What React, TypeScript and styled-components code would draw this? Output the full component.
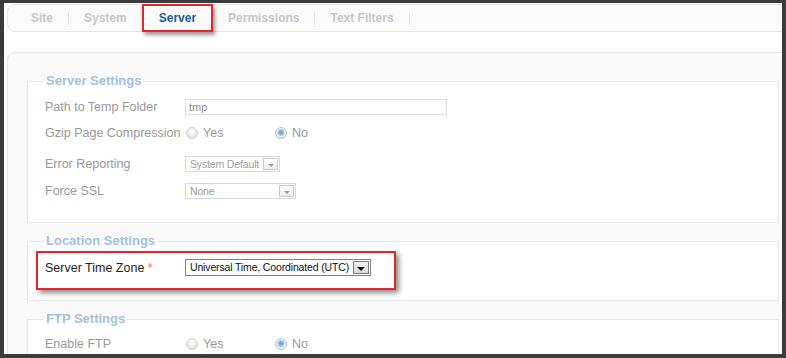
import React from "react";
import styled, { createGlobalStyle } from "styled-components";

const GlobalStyle = createGlobalStyle`
  html, body {
    margin: 0;
    padding: 0;
    background: #fff;
  }
  body {
    font-family: "Liberation Sans", Arial, sans-serif;
  }
`;

const tabs = ["Site", "System", "Server", "Permissions", "Text Filters"];
const activeTab = "Server";

function App() {
  return (
    <>
      <GlobalStyle />
      <Frame>
        <TabBar>
          {tabs.map((tab, i) => {
            const next = tabs[i + 1];
            const showDivider = tab !== activeTab && next !== activeTab;
            return (
              <React.Fragment key={tab}>
                <Tab $active={tab === activeTab}>{tab}</Tab>
                {showDivider && <Divider />}
              </React.Fragment>
            );
          })}
        </TabBar>

        <Panel>
          <Fieldset $top={10} $bottom={23}>
            <Legend>Server Settings</Legend>
            <Row>
              <Label>Path to Temp Folder</Label>
              <TextInput value="tmp" readOnly />
            </Row>
            <Row $space={10}>
              <Label>Gzip Page Compression</Label>
              <Radio label="Yes" />
              <Radio label="No" checked />
            </Row>
            <Row $space={15}>
              <Label>Error Reporting</Label>
              <Select>
                <SelectText>System Default</SelectText>
                <SelectArrow />
              </Select>
            </Row>
            <Row $space={11}>
              <Label>Force SSL</Label>
              <Select $width={111}>
                <SelectText>None</SelectText>
                <SelectArrow />
              </Select>
            </Row>
          </Fieldset>

          <Fieldset $top={2} $bottom={10}>
            <Legend>Location Settings</Legend>
            <Highlight>
              <Label $strong>
                Server Time Zone <Required>*</Required>
              </Label>
              <Select $strong>
                <SelectText>Universal Time, Coordinated (UTC)</SelectText>
                <SelectArrow $strong />
              </Select>
            </Highlight>
          </Fieldset>

          <Fieldset $top={9} $bottom={20}>
            <Legend>FTP Settings</Legend>
            <Row>
              <Label>Enable FTP</Label>
              <Radio label="Yes" />
              <Radio label="No" checked />
            </Row>
          </Fieldset>
        </Panel>
      </Frame>
    </>
  );
}

function Radio({ label, checked }: { label: string; checked?: boolean }) {
  return (
    <RadioOption>
      <RadioDot $checked={checked} />
      {label}
    </RadioOption>
  );
}

export default App;

const Frame = styled.div`
  box-sizing: border-box;
  width: 786px;
  height: 358px;
  border-style: solid;
  border-color: #3b3b3b;
  border-width: 3px 4px 4px 4px;
  overflow: hidden;
  background: #fff;
`;

const TabBar = styled.div`
  display: flex;
  align-items: center;
  height: 26px;
  margin: 1px -12px 0 3px;
  padding-left: 8px;
  border: 1px solid #e6e6e6;
  border-radius: 8px;
  background: #fafafa;
`;

const Tab = styled.div<{ $active?: boolean }>`
  box-sizing: border-box;
  padding: 0 15px;
  font-size: 12px;
  font-weight: bold;
  line-height: 26px;
  white-space: nowrap;
  color: ${(p) => (p.$active ? "#1f5e98" : "#c7c7c7")};
  ${(p) =>
    p.$active &&
    `
    height: 28px;
    margin: -1px 0;
    line-height: 24px;
    border: 2px solid #e2262b;
    background: #fafafa;
    box-shadow: 2px 3px 4px rgba(0, 0, 0, 0.4);
  `}
`;

const Divider = styled.span`
  width: 1px;
  height: 13px;
  background: #e2e2e2;
`;

const Panel = styled.div`
  margin: 20px -12px 0 3px;
  padding: 20px 14px 30px 19px;
  border: 1px solid #e6e6e6;
  border-radius: 8px 0 0 0;
  background: #f9f9f9;
`;

const Fieldset = styled.fieldset<{ $top: number; $bottom: number }>`
  margin: 0 0 10px;
  padding: ${(p) => p.$top}px 0 ${(p) => p.$bottom}px 17px;
  min-width: 0;
  border: 1px solid #e6e6e6;
  background: #fff;
`;

const Legend = styled.legend`
  margin-left: -1px;
  padding: 0 2px;
  font-size: 13px;
  font-weight: bold;
  line-height: 16px;
  color: #a3c2dd;
`;

const Row = styled.div<{ $space?: number }>`
  display: flex;
  align-items: center;
  height: 16px;
  margin-top: ${(p) => p.$space ?? 0}px;
`;

const Label = styled.div<{ $strong?: boolean }>`
  width: 140px;
  flex-shrink: 0;
  font-size: 12.5px;
  white-space: nowrap;
  color: ${(p) => (p.$strong ? "#1e1e1e" : "#999")};
  padding-top: ${(p) => (p.$strong ? "2px" : "0")};
`;

const Required = styled.span`
  color: #e8782e;
`;

const TextInput = styled.input`
  box-sizing: border-box;
  width: 262px;
  height: 16px;
  margin: 0;
  padding: 0 3px;
  border: 1px solid #dedede;
  outline: none;
  font-family: "Liberation Sans", Arial, sans-serif;
  font-size: 11px;
  color: #8a8a8a;
  background: #fff;
`;

const RadioOption = styled.label`
  display: inline-flex;
  align-items: center;
  gap: 5px;
  width: 88px;
  padding-left: 1px;
  font-size: 12.5px;
  color: #999;
`;

const RadioDot = styled.span<{ $checked?: boolean }>`
  box-sizing: border-box;
  width: 12px;
  height: 12px;
  border-radius: 50%;
  border: 1px solid ${(p) => (p.$checked ? "#b5c3d1" : "#d0d0d0")};
  background: ${(p) =>
    p.$checked
      ? "radial-gradient(circle at 50% 45%, #5e9fd6 0, #7fb3df 2px, #b9d4ec 3.2px, #f4f4f4 4px, #e3e3e3 6px)"
      : "radial-gradient(circle at 50% 35%, #ffffff 0, #f2f2f2 3px, #e2e2e2 6px)"};
`;

const Select = styled.div<{ $width?: number; $strong?: boolean }>`
  box-sizing: border-box;
  display: inline-flex;
  align-items: stretch;
  height: ${(p) => (p.$strong ? 17 : 16)}px;
  width: ${(p) => (p.$width ? `${p.$width}px` : "auto")};
  border: 1px solid ${(p) => (p.$strong ? "#838383" : "#d8d8d8")};
  background: #fff;
  font-size: 10.5px;
  letter-spacing: -0.15px;
  color: ${(p) => (p.$strong ? "#111" : "#9c9c9c")};
`;

const SelectText = styled.span`
  flex: 1;
  padding: 0 3px 0 4px;
  line-height: 14px;
  white-space: nowrap;
`;

const SelectArrow = styled.span<{ $strong?: boolean }>`
  box-sizing: border-box;
  width: ${(p) => (p.$strong ? 16 : 15)}px;
  margin: 1px;
  display: flex;
  align-items: center;
  justify-content: center;
  padding-top: 3px;
  border: 1px solid ${(p) => (p.$strong ? "#7a7a7a" : "#cbcbcb")};
  background: ${(p) =>
    p.$strong ? "linear-gradient(#f2f2f2, #d9d9d9)" : "linear-gradient(#ffffff, #ececec)"};

  &::before {
    content: "";
    border-left: ${(p) => (p.$strong ? 4 : 3)}px solid transparent;
    border-right: ${(p) => (p.$strong ? 4 : 3)}px solid transparent;
    border-top: ${(p) => (p.$strong ? 4 : 3)}px solid ${(p) => (p.$strong ? "#111" : "#9a9a9a")};
  }
`;

const Highlight = styled.div`
  box-sizing: border-box;
  display: flex;
  align-items: flex-start;
  width: 360px;
  height: 39px;
  margin-left: -9px;
  padding: 6px 0 0 7px;
  border: 2px solid #e2262b;
  box-shadow: 3px 3px 5px rgba(0, 0, 0, 0.45);
  background: #fff;
`;
